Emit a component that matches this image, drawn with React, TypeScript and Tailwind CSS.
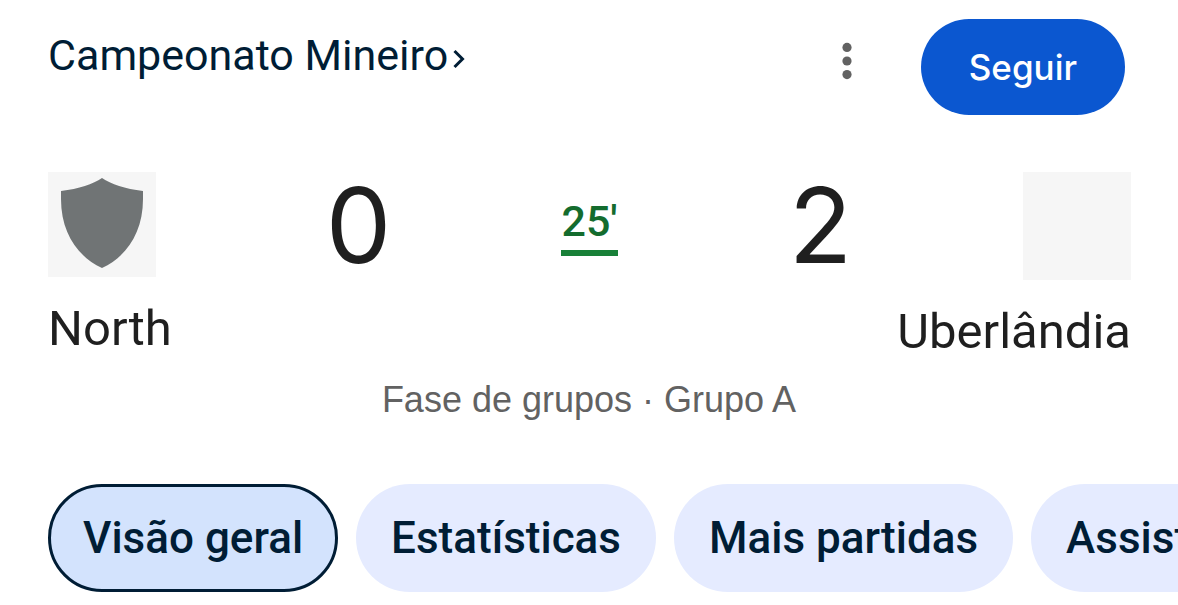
import React from "react";

const tabs = ["Visão geral", "Estatísticas", "Mais partidas", "Assistir"];

const MoreIcon: React.FC = () => (
    <svg width="12" height="38" viewBox="0 0 12 38" fill="#626262" aria-hidden="true">
        <circle cx="6" cy="5.4" r="4.6" />
        <circle cx="6" cy="19" r="4.6" />
        <circle cx="6" cy="32.6" r="4.6" />
    </svg>
);

const ShieldIcon: React.FC = () => (
    <svg width="82" height="90" viewBox="0 0 82 90" fill="#707475" aria-hidden="true">
        <path d="M41 0C50 6 64 11 82 13V21C82 55 65 79 41 90C17 79 0 55 0 21V13C18 11 32 6 41 0Z" />
    </svg>
);

const ChevronIcon: React.FC = () => (
    <svg className="mt-2" width="14" height="20" viewBox="0 0 14 20" fill="none" stroke="#001d35" strokeWidth="3" aria-hidden="true">
        <path d="M2.5 2L10.5 10L2.5 18" />
    </svg>
);

const Header: React.FC = () => (
    <header className="flex items-start justify-between pr-[53px] pl-12">
        <a href="#campeonato" className="flex items-center gap-1 pt-3 text-[43px] leading-12 text-[#001d35]">
            Campeonato Mineiro
            <ChevronIcon />
        </a>
        <div className="flex items-start gap-[68px]">
            <button type="button" aria-label="Mais opções" className="pt-[23px]">
                <MoreIcon />
            </button>
            <button
                type="button"
                className="h-24 rounded-full bg-[#0b57d0] px-12 font-[Inter,sans-serif] text-[35px] leading-12 font-medium text-white"
            >
                Seguir
            </button>
        </div>
    </header>
);

const Scoreboard: React.FC = () => (
    <section className="flex items-start justify-between pt-[57px] pr-[47px] pl-12 text-[#1f1f1f]">
        <div className="flex w-0 flex-1 flex-col items-start gap-6">
            <div className="flex h-[105px] w-[108px] items-start justify-center bg-[#f6f6f6] pt-1.5">
                <ShieldIcon />
            </div>
            <h2 className="text-[49px] leading-14">North</h2>
        </div>
        <div className="flex w-[532px] items-start justify-between font-[Inter,sans-serif]">
            <span className="w-[70px] text-center text-[104px] leading-[106px]">0</span>
            <span className="mt-6 border-b-6 border-[#188038] pb-1 font-[Roboto,sans-serif] text-[43px] leading-[50px] font-medium text-[#146c2e]">
                25'
            </span>
            <span className="w-[70px] text-center text-[104px] leading-[106px]">2</span>
        </div>
        <div className="flex w-0 flex-1 flex-col items-end gap-6">
            <div className="size-[108px] bg-[#f6f6f6]" />
            <h2 className="text-[49px] leading-14">Uberlândia</h2>
        </div>
    </section>
);

export default function App() {
    return (
        <main className="overflow-hidden bg-white pt-[19px] font-[Roboto,sans-serif]">
            <Header />
            <Scoreboard />
            <p className="pt-4 text-center font-['Liberation_Sans',sans-serif] text-4xl leading-12 text-[#626262]">
                Fase de grupos · Grupo A
            </p>
            <nav className="flex gap-[18px] overflow-hidden pt-[60px] pb-3 pl-12 text-[44px] leading-12 font-medium whitespace-nowrap text-[#001d35]">
                {tabs.map((tab, i) => (
                    <button
                        key={tab}
                        type="button"
                        className={
                            i === 0
                                ? "h-[108px] shrink-0 rounded-full border-3 border-[#001d35] bg-[#d3e3fd] px-8"
                                : "h-[108px] shrink-0 rounded-full bg-[#e5ebff] px-[35px]"
                        }
                    >
                        {tab}
                    </button>
                ))}
            </nav>
        </main>
    );
}
